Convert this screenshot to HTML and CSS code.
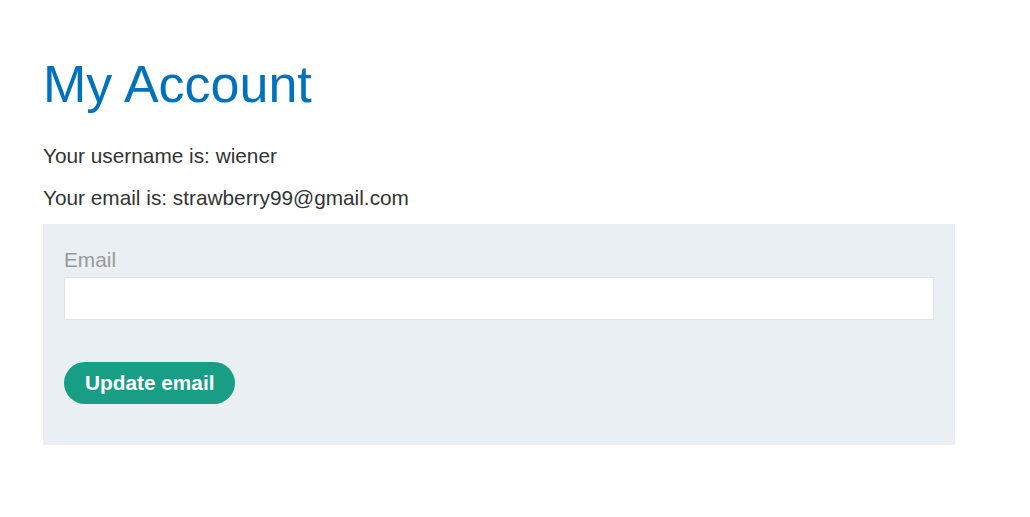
FILE: index.html
```html
<!DOCTYPE html>
<html>
<head>
<meta charset="utf-8">
<link rel="stylesheet" href="styles.css">
</head>
<body>
<div class="container">
  <h1 class="title">My Account</h1>
  <p class="info">Your username is: wiener</p>
  <p class="info">Your email is: strawberry99@gmail.com</p>
  <form class="login-form">
    <label class="label">Email</label>
    <input class="field" type="email" name="email">
    <button class="button" type="button">Update email</button>
  </form>
</div>
</body>
</html>
```
FILE: styles.css
```css
html, body {
  margin: 0;
  padding: 0;
  background: #ffffff;
  font-family: "Liberation Sans", Arial, sans-serif;
  color: #333332;
}
.container {
  padding: 52px 75px 0 43px;
}
.title {
  margin: 0;
  font-size: 52px;
  font-weight: normal;
  color: #0071bc;
  line-height: 64px;
}
.info {
  margin: 0;
  font-size: 20.8px;
  line-height: 22px;
}
.title + .info {
  margin-top: 29px;
}
.info + .info {
  margin-top: 20px;
}
.login-form {
  margin-top: 15px;
  width: 912px;
  box-sizing: border-box;
  background: #e9eff2;
  padding: 24px 21px 41px 21px;
  display: flex;
  flex-direction: column;
  align-items: flex-start;
}
.label {
  font-size: 20.8px;
  color: #999999;
  line-height: 24px;
  margin-bottom: 5px;
}
.field {
  width: 100%;
  box-sizing: border-box;
  height: 43px;
  border: 1px solid #e0e4e6;
  background: #ffffff;
  margin: 0 0 42px 0;
}
.button {
  height: 42px;
  padding: 0 21px;
  border: none;
  border-radius: 21px;
  background: #179e84;
  color: #ffffff;
  font-family: "Liberation Sans", Arial, sans-serif;
  font-weight: bold;
  font-size: 20.8px;
}
```
